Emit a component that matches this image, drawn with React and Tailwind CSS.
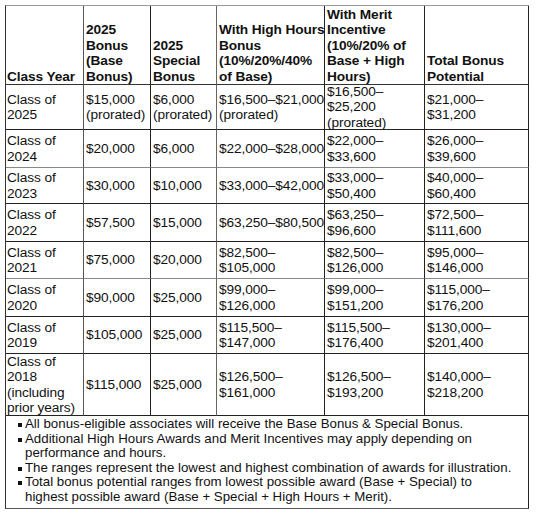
import React from "react";

const colW = "grid-cols-[78px_67px_66px_108px_100px_104px]";
const rightColors = [
  "border-r-[#555]",
  "border-r-[#222]",
  "border-r-[#666]",
  "border-r-[#222]",
  "border-r-[#222]",
  "border-r-[#222]",
];

const header = [
  ["Class Year"],
  ["2025", "Bonus", "(Base", "Bonus)"],
  ["2025", "Special", "Bonus"],
  ["With High Hours", "Bonus", "(10%/20%/40%", "of Base)"],
  ["With Merit", "Incentive", "(10%/20% of", "Base + High", "Hours)"],
  ["Total Bonus", "Potential"],
];

const rows = [
  {
    b: "border-b-[#222]",
    cells: [
      ["Class of", "2025"],
      ["$15,000", "(prorated)"],
      ["$6,000", "(prorated)"],
      ["$16,500–$21,000", "(prorated)"],
      ["$16,500–", "$25,200", "(prorated)"],
      ["$21,000–", "$31,200"],
    ],
  },
  {
    b: "border-b-[#888]",
    cells: [
      ["Class of", "2024"],
      ["$20,000"],
      ["$6,000"],
      ["$22,000–$28,000"],
      ["$22,000–", "$33,600"],
      ["$26,000–", "$39,600"],
    ],
  },
  {
    b: "border-b-[#222]",
    cells: [
      ["Class of", "2023"],
      ["$30,000"],
      ["$10,000"],
      ["$33,000–$42,000"],
      ["$33,000–", "$50,400"],
      ["$40,000–", "$60,400"],
    ],
  },
  {
    b: "border-b-[#222]",
    cells: [
      ["Class of", "2022"],
      ["$57,500"],
      ["$15,000"],
      ["$63,250–$80,500"],
      ["$63,250–", "$96,600"],
      ["$72,500–", "$111,600"],
    ],
  },
  {
    b: "border-b-[#888]",
    cells: [
      ["Class of", "2021"],
      ["$75,000"],
      ["$20,000"],
      ["$82,500–", "$105,000"],
      ["$82,500–", "$126,000"],
      ["$95,000–", "$146,000"],
    ],
  },
  {
    b: "border-b-[#222]",
    cells: [
      ["Class of", "2020"],
      ["$90,000"],
      ["$25,000"],
      ["$99,000–", "$126,000"],
      ["$99,000–", "$151,200"],
      ["$115,000–", "$176,200"],
    ],
  },
  {
    b: "border-b-[#222]",
    cells: [
      ["Class of", "2019"],
      ["$105,000"],
      ["$25,000"],
      ["$115,500–", "$147,000"],
      ["$115,500–", "$176,400"],
      ["$130,000–", "$201,400"],
    ],
  },
  {
    b: "border-b-[#222]",
    cells: [
      ["Class of", "2018", "(including", "prior years)"],
      ["$115,000"],
      ["$25,000"],
      ["$126,500–", "$161,000"],
      ["$126,500–", "$193,200"],
      ["$140,000–", "$218,200"],
    ],
  },
];

const notes = [
  ["All bonus-eligible associates will receive the Base Bonus & Special Bonus."],
  ["Additional High Hours Awards and Merit Incentives may apply depending on", "performance and hours."],
  ["The ranges represent the lowest and highest combination of awards for illustration."],
  ["Total bonus potential ranges from lowest possible award (Base + Special) to", "highest possible award (Base + Special + High Hours + Merit)."],
];

function Cell({ lines, ci, rowB, head }) {
  return (
    <div
      className={`flex flex-col ${head ? "justify-end font-bold" : "justify-center"} border-r border-b ${rightColors[ci]} ${rowB} ${ci === 0 ? "pl-px" : "pl-[2px]"} whitespace-nowrap`}
    >
      {lines.map((l, i) => (
        <div key={i}>{l}</div>
      ))}
    </div>
  );
}

export default function App() {
  return (
    <div className="w-[537px] h-[514px] bg-white pt-[5px] pl-[5px] font-['Liberation_Sans',Arial,sans-serif] text-[#111]">
      <div
        className={`grid ${colW} grid-rows-[79px_45px_38px_36px_38px_37px_38px_37px_62px] w-[524px] border-l border-t border-l-[#333] border-t-[#999] text-[13.7px] leading-[15.5px] tracking-[-0.1px]`}
      >
        {header.map((lines, ci) => (
          <Cell key={ci} lines={lines} ci={ci} rowB="border-b-[#333]" head />
        ))}
        {rows.map((r, ri) =>
          r.cells.map((lines, ci) => (
            <Cell key={`${ri}-${ci}`} lines={lines} ci={ci} rowB={r.b} />
          ))
        )}
      </div>
      <div className="w-[524px] h-[93px] border-l border-r border-b border-l-[#333] border-r-[#222] border-b-[#555] pt-[1px] text-[13.3px] leading-[14.6px]">
        {notes.map((lines, i) => (
          <div key={i} className="flex">
            <div className="w-[19px] shrink-0 flex justify-end pr-[3px] pt-[6px]">
              <div className="w-[4px] h-[4px] bg-[#111]"></div>
            </div>
            <div className="whitespace-nowrap">
              {lines.map((l, j) => (
                <div key={j}>{l}</div>
              ))}
            </div>
          </div>
        ))}
      </div>
    </div>
  );
}
